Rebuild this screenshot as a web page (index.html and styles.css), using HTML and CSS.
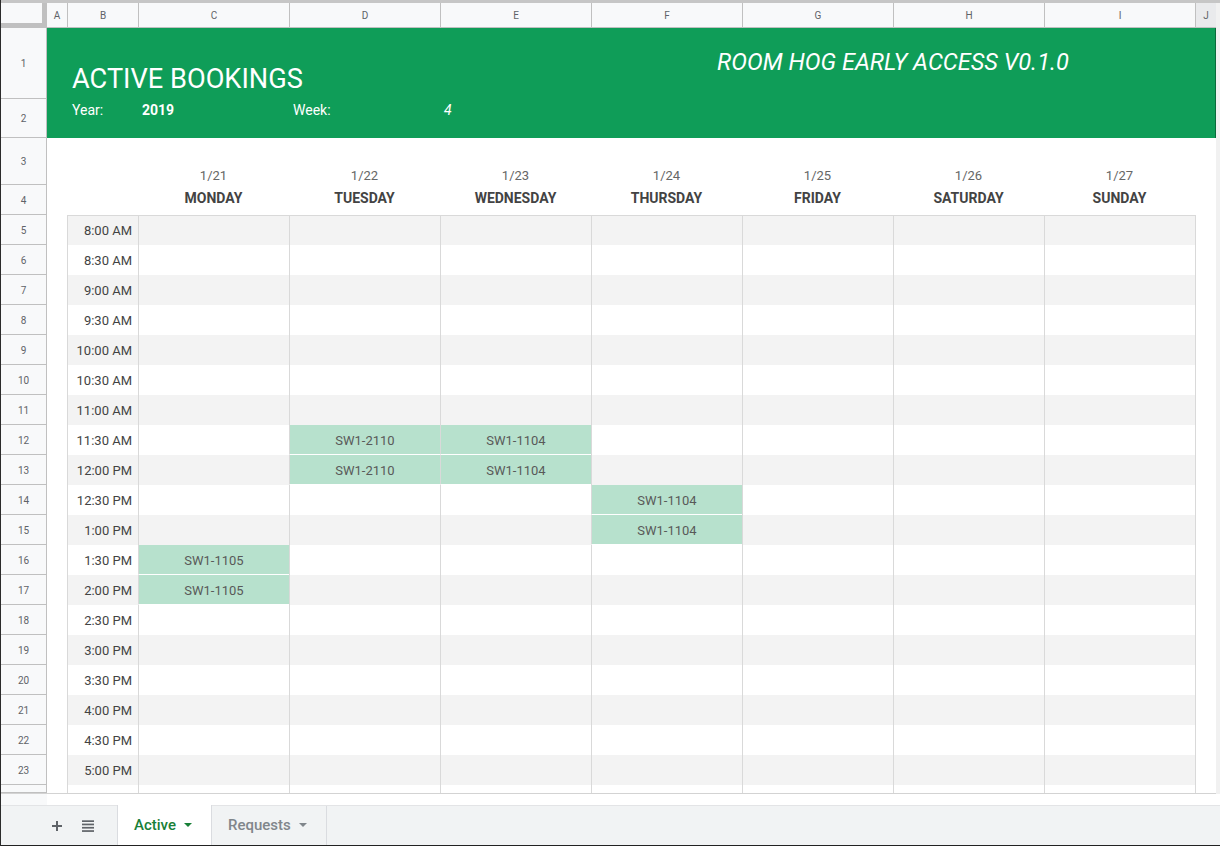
FILE: index.html
```html
<!DOCTYPE html>
<html>
<head>
<meta charset="utf-8">
<title>Room Hog - Active Bookings</title>
<link rel="stylesheet" href="styles.css">
</head>
<body>
<div class="app">
  <div class="topstrip"></div>
  <div class="sheet">
    <div class="main">
      <div class="colheads">
        <div class="corner"></div>
        <div class="ch a">A</div>
        <div class="ch">B</div>
        <div class="ch">C</div>
        <div class="ch">D</div>
        <div class="ch">E</div>
        <div class="ch">F</div>
        <div class="ch">G</div>
        <div class="ch">H</div>
        <div class="ch">I</div>
        <div class="ch j">J</div>
      </div>

      <div class="band">
        <div class="rn rn1">1</div>
        <div class="rn rn2">2</div>
        <div class="banner"></div>
        <div class="title">ACTIVE BOOKINGS</div>
        <div class="version">ROOM HOG EARLY ACCESS V0.1.0</div>
        <div class="lbl year">Year:</div>
        <div class="val yearval">2019</div>
        <div class="lbl week">Week:</div>
        <div class="weekval">4</div>
      </div>

      <div class="row h47">
        <div class="rn">3</div><div></div><div></div>
        <div class="date">1/21</div><div class="date">1/22</div><div class="date">1/23</div><div class="date">1/24</div><div class="date">1/25</div><div class="date">1/26</div><div class="date">1/27</div>
        <div></div>
      </div>
      <div class="row">
        <div class="rn">4</div><div></div><div></div>
        <div class="day">MONDAY</div><div class="day">TUESDAY</div><div class="day">WEDNESDAY</div><div class="day">THURSDAY</div><div class="day">FRIDAY</div><div class="day">SATURDAY</div><div class="day">SUNDAY</div>
        <div></div>
      </div>

      <div class="row first alt"><div class="rn">5</div><div></div><div class="tb time">8:00 AM</div><div class="tb"></div><div class="tb"></div><div class="tb"></div><div class="tb"></div><div class="tb"></div><div class="tb"></div><div class="tb"></div><div class="jb"></div></div>
      <div class="row"><div class="rn">6</div><div></div><div class="tb time">8:30 AM</div><div class="tb"></div><div class="tb"></div><div class="tb"></div><div class="tb"></div><div class="tb"></div><div class="tb"></div><div class="tb"></div><div class="jb"></div></div>
      <div class="row alt"><div class="rn">7</div><div></div><div class="tb time">9:00 AM</div><div class="tb"></div><div class="tb"></div><div class="tb"></div><div class="tb"></div><div class="tb"></div><div class="tb"></div><div class="tb"></div><div class="jb"></div></div>
      <div class="row"><div class="rn">8</div><div></div><div class="tb time">9:30 AM</div><div class="tb"></div><div class="tb"></div><div class="tb"></div><div class="tb"></div><div class="tb"></div><div class="tb"></div><div class="tb"></div><div class="jb"></div></div>
      <div class="row alt"><div class="rn">9</div><div></div><div class="tb time">10:00 AM</div><div class="tb"></div><div class="tb"></div><div class="tb"></div><div class="tb"></div><div class="tb"></div><div class="tb"></div><div class="tb"></div><div class="jb"></div></div>
      <div class="row"><div class="rn">10</div><div></div><div class="tb time">10:30 AM</div><div class="tb"></div><div class="tb"></div><div class="tb"></div><div class="tb"></div><div class="tb"></div><div class="tb"></div><div class="tb"></div><div class="jb"></div></div>
      <div class="row alt"><div class="rn">11</div><div></div><div class="tb time">11:00 AM</div><div class="tb"></div><div class="tb"></div><div class="tb"></div><div class="tb"></div><div class="tb"></div><div class="tb"></div><div class="tb"></div><div class="jb"></div></div>
      <div class="row"><div class="rn">12</div><div></div><div class="tb time">11:30 AM</div><div class="tb"></div><div class="tb bk">SW1-2110</div><div class="tb bk">SW1-1104</div><div class="tb"></div><div class="tb"></div><div class="tb"></div><div class="tb"></div><div class="jb"></div></div>
      <div class="row alt"><div class="rn">13</div><div></div><div class="tb time">12:00 PM</div><div class="tb"></div><div class="tb bk">SW1-2110</div><div class="tb bk">SW1-1104</div><div class="tb"></div><div class="tb"></div><div class="tb"></div><div class="tb"></div><div class="jb"></div></div>
      <div class="row"><div class="rn">14</div><div></div><div class="tb time">12:30 PM</div><div class="tb"></div><div class="tb"></div><div class="tb"></div><div class="tb bk">SW1-1104</div><div class="tb"></div><div class="tb"></div><div class="tb"></div><div class="jb"></div></div>
      <div class="row alt"><div class="rn">15</div><div></div><div class="tb time">1:00 PM</div><div class="tb"></div><div class="tb"></div><div class="tb"></div><div class="tb bk">SW1-1104</div><div class="tb"></div><div class="tb"></div><div class="tb"></div><div class="jb"></div></div>
      <div class="row"><div class="rn">16</div><div></div><div class="tb time">1:30 PM</div><div class="tb bk">SW1-1105</div><div class="tb"></div><div class="tb"></div><div class="tb"></div><div class="tb"></div><div class="tb"></div><div class="tb"></div><div class="jb"></div></div>
      <div class="row alt"><div class="rn">17</div><div></div><div class="tb time">2:00 PM</div><div class="tb bk">SW1-1105</div><div class="tb"></div><div class="tb"></div><div class="tb"></div><div class="tb"></div><div class="tb"></div><div class="tb"></div><div class="jb"></div></div>
      <div class="row"><div class="rn">18</div><div></div><div class="tb time">2:30 PM</div><div class="tb"></div><div class="tb"></div><div class="tb"></div><div class="tb"></div><div class="tb"></div><div class="tb"></div><div class="tb"></div><div class="jb"></div></div>
      <div class="row alt"><div class="rn">19</div><div></div><div class="tb time">3:00 PM</div><div class="tb"></div><div class="tb"></div><div class="tb"></div><div class="tb"></div><div class="tb"></div><div class="tb"></div><div class="tb"></div><div class="jb"></div></div>
      <div class="row"><div class="rn">20</div><div></div><div class="tb time">3:30 PM</div><div class="tb"></div><div class="tb"></div><div class="tb"></div><div class="tb"></div><div class="tb"></div><div class="tb"></div><div class="tb"></div><div class="jb"></div></div>
      <div class="row alt"><div class="rn">21</div><div></div><div class="tb time">4:00 PM</div><div class="tb"></div><div class="tb"></div><div class="tb"></div><div class="tb"></div><div class="tb"></div><div class="tb"></div><div class="tb"></div><div class="jb"></div></div>
      <div class="row"><div class="rn">22</div><div></div><div class="tb time">4:30 PM</div><div class="tb"></div><div class="tb"></div><div class="tb"></div><div class="tb"></div><div class="tb"></div><div class="tb"></div><div class="tb"></div><div class="jb"></div></div>
      <div class="row alt"><div class="rn">23</div><div></div><div class="tb time">5:00 PM</div><div class="tb"></div><div class="tb"></div><div class="tb"></div><div class="tb"></div><div class="tb"></div><div class="tb"></div><div class="tb"></div><div class="jb"></div></div>
      <div class="row h8"><div class="rn"></div><div></div><div class="tb"></div><div class="tb"></div><div class="tb"></div><div class="tb"></div><div class="tb"></div><div class="tb"></div><div class="tb"></div><div class="tb"></div><div class="jb"></div></div>
    </div>
    <div class="vscroll"></div>
  </div>
  <div class="hstrip"><div class="hstrip-rn"></div></div>
  <div class="tabbar">
    <div class="tbtn plus">
      <svg width="12" height="12" viewBox="0 0 12 12"><path d="M6 1v10M1 6h10" stroke="#5f6368" stroke-width="2" fill="none"/></svg>
    </div>
    <div class="tbtn list">
      <svg width="12" height="12" viewBox="0 0 12 12"><rect x="0" y="0.3" width="12" height="1.7" fill="#5f6368"/><rect x="0" y="3.6" width="12" height="1.7" fill="#5f6368"/><rect x="0" y="6.9" width="12" height="1.7" fill="#5f6368"/><rect x="0" y="10.2" width="12" height="1.7" fill="#5f6368"/></svg>
    </div>
    <div class="tab active"><span>Active</span><span class="caret"></span></div>
    <div class="tab"><span>Requests</span><span class="caret"></span></div>
  </div>
</div>
</body>
</html>
```

FILE: styles.css
```css
* { box-sizing: border-box; margin: 0; padding: 0; }
html, body { margin: 0; width: 1220px; height: 846px; overflow: hidden; background: #fff; }
body { font-family: Roboto, "Liberation Sans", Arial, sans-serif; }

.app {
  --cols: 46px 20px 71px repeat(7, 151px) 21px;
  width: 1220px; height: 846px;
  display: flex; flex-direction: column;
  border-left: 1px solid #2b2b2b;
}
.topstrip { height: 3px; flex: none; background: #c6c6c6; }
.sheet { display: flex; flex: none; height: 791px; }
.main { width: 1215px; flex: none; border-bottom: 1px solid #d3d3d3; }
.vscroll { width: 4px; flex: none; background: #f1f1f1; }

/* column headers */
.colheads { display: grid; grid-template-columns: var(--cols); height: 25px; }
.corner { background: #f8f9fa; border-right: 5px solid #c0c0c0; border-bottom: 5px solid #c0c0c0; }
.ch {
  background: #f8f9fa; border-bottom: 1px solid #c0c0c0; border-left: 1px solid #c0c0c0;
  font-size: 10px; color: #5f6368;
  display: flex; align-items: center; justify-content: center;
}
.ch.a { border-left: none; }
.ch.j { background: #e9eaec; }

/* row numbers */
.rn {
  background: #f8f9fa; border-right: 1px solid #c0c0c0; border-bottom: 1px solid #c0c0c0;
  font-size: 10px; color: #5f6368;
  display: flex; align-items: center; justify-content: center;
  padding-top: 1px;
  overflow: hidden;
}

/* green banner */
.band { display: grid; grid-template-columns: var(--cols); grid-template-rows: 71px 39px; }
.rn1 { grid-column: 1; grid-row: 1; }
.rn2 { grid-column: 1; grid-row: 2; }
.banner { grid-column: 2 / -1; grid-row: 1 / 3; background: #0f9d58; border-right: 1px solid #0a6a3b; }
.title {
  grid-column: 3 / 8; grid-row: 1; align-self: end;
  padding: 0 0 4px 5px;
  font-size: 27.2px; color: #fff; white-space: nowrap;
}
.version {
  grid-column: 7 / 11; grid-row: 1; align-self: start;
  padding-top: 20px; text-align: center;
  font-size: 23.6px; font-style: italic; color: #fff; white-space: nowrap;
}
.lbl, .val, .weekval {
  grid-row: 2; align-self: start; padding-top: 3px;
  font-size: 14px; color: #fff; white-space: nowrap;
}
.year { grid-column: 3; padding-left: 5px; }
.yearval { grid-column: 4; padding-left: 4px; font-weight: 700; }
.week { grid-column: 5; padding-left: 4px; }
.weekval { grid-column: 6; padding-left: 4px; font-style: italic; }

/* day header + table rows */
.row { display: grid; grid-template-columns: var(--cols); height: 30px; }
.row.h47 { height: 47px; }
.row.h8 { height: 8px; }

.date {
  display: flex; align-items: flex-end; justify-content: center;
  padding-bottom: 2px; font-size: 13px; color: #666;
}
.day {
  display: flex; align-items: flex-start; justify-content: center;
  padding-top: 5px; font-size: 14px; font-weight: 700; color: #434343;
}

.tb { border-left: 1px solid #d9d9d9; }
.jb { border-left: 1px solid #d9d9d9; }
.first .tb { border-top: 1px solid #d9d9d9; }
.alt .tb { background: #f3f3f3; }
.time {
  display: flex; align-items: center; justify-content: flex-end;
  padding-right: 6px; font-size: 13px; color: #434343; white-space: nowrap;
}
.row .bk {
  background: #b7e1cd; border-bottom: 1px solid #fff;
  display: flex; align-items: center; justify-content: center;
  padding-top: 1px;
  font-size: 13px; color: #595959;
}

/* bottom strip + tabs */
.hstrip { height: 11px; flex: none; display: flex; }
.hstrip-rn { width: 46px; background: #f8f9fa; }
.tabbar {
  height: 41px; flex: none;
  background: #f1f3f4; border-top: 1px solid #e3e4e6; border-bottom: 1px solid #222;
  display: flex; align-items: stretch;
  padding-left: 43px;
}
.tbtn { width: 26px; display: flex; align-items: center; justify-content: center; }
.tbtn.list { margin-left: 5px; }
.tab {
  display: flex; align-items: center; gap: 8px;
  width: 115px; padding-left: 16px; padding-bottom: 1px;
  font-size: 15px; font-weight: 500; color: #80868b;
  border-right: 1px solid #dadce0;
}
.tab.active {
  width: 95px; margin-left: 16px; margin-top: -1px;
  background: #fff; color: #188038; border-left: 1px solid #dadce0;
}
.caret {
  width: 0; height: 0;
  border-left: 4px solid transparent; border-right: 4px solid transparent;
  border-top: 4px solid currentColor;
}
```
